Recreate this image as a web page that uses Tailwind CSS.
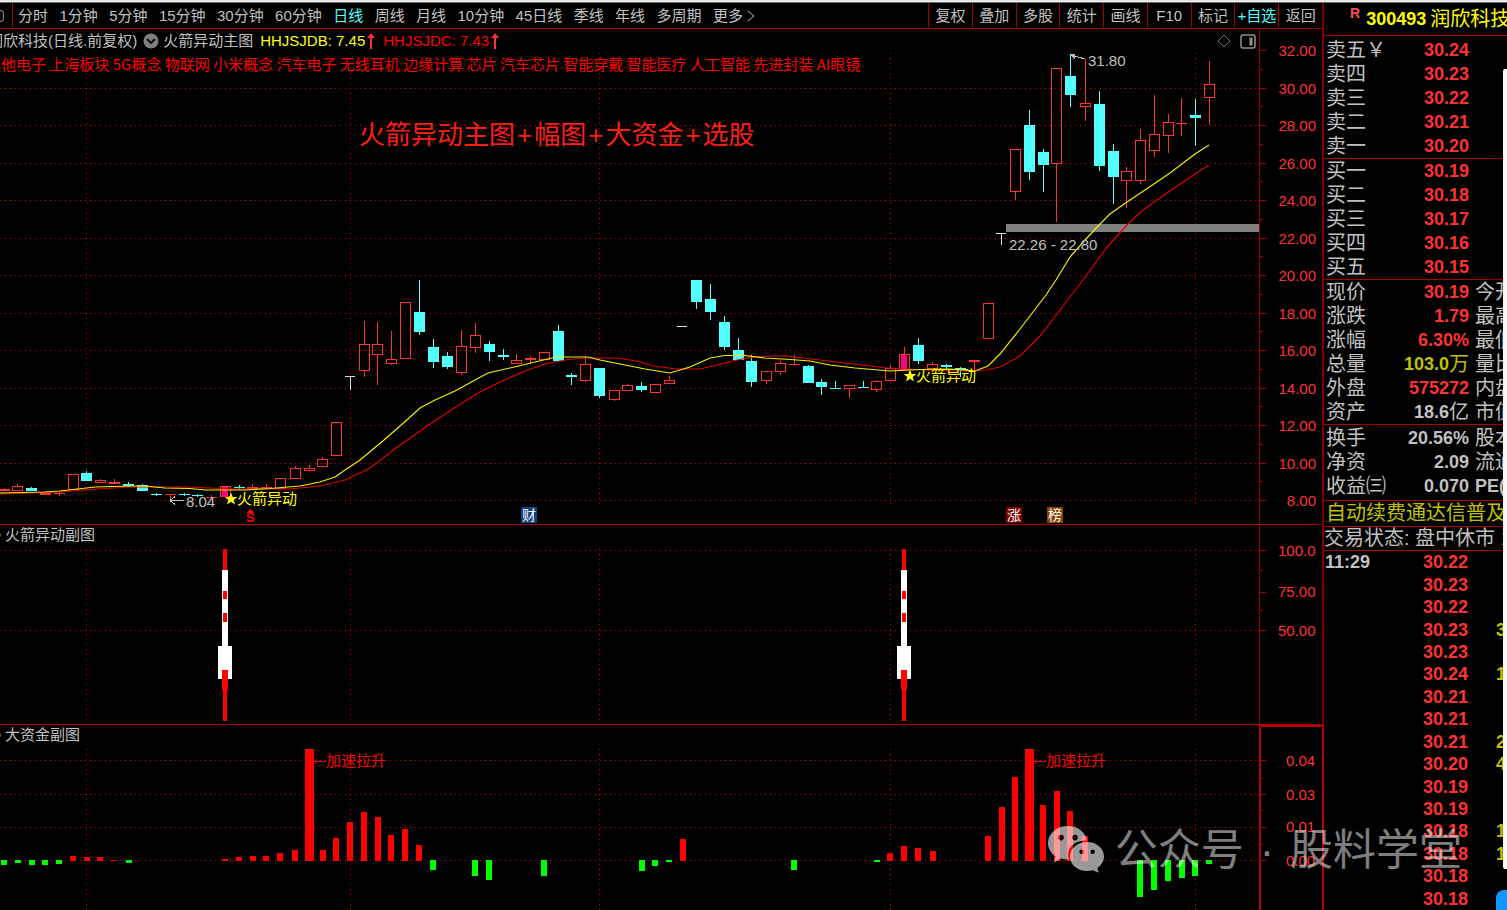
<!DOCTYPE html>
<html lang="zh-CN">
<head>
  <meta charset="UTF-8">
  <meta name="viewport" content="width=device-width, initial-scale=1.0" />
  <title>润欣科技 300493</title>
  <script src="https://cdn.jsdelivr.net/npm/@tailwindcss/browser@4"></script>
</head>
<body class="relative flex h-screen flex-col overflow-hidden bg-black font-['Liberation_Sans','Noto_Sans_CJK_SC',sans-serif] text-[15px] text-[#c0c0c0]">

  <div class="h-[3px] shrink-0 border-b border-[#707070] bg-[#e8e8e8]"></div>

  <div class="flex min-h-0 flex-1">

    <main class="min-w-0 flex-1 overflow-hidden">

      <!-- Toolbar -->
      <div class="flex h-[26px] items-stretch justify-between overflow-hidden border-b border-[#a00000] leading-6 whitespace-nowrap">
        <div class="flex">
          <div class="flex w-[13px] items-center border-r border-[#a00000]">
            <span class="h-3 w-1 rounded-r-sm border border-l-0 border-[#909090]"></span>
          </div>
          <nav class="ml-[5px] flex w-[737px] justify-between">
            <button>分时</button>
            <button>1分钟</button>
            <button>5分钟</button>
            <button>15分钟</button>
            <button>30分钟</button>
            <button>60分钟</button>
            <button class="text-[#54ffff]">日线</button>
            <button>周线</button>
            <button>月线</button>
            <button>10分钟</button>
            <button>45日线</button>
            <button>季线</button>
            <button>年线</button>
            <button>多周期</button>
            <button class="flex items-center gap-1">更多
              <svg class="h-3 w-2" viewBox="0 0 8 12" fill="none" stroke="currentColor"><path d="M1 1l6 5-6 5" /></svg>
            </button>
          </nav>
        </div>
        <div class="flex w-[396px] border-r-2 border-[#800000]">
          <button class="flex-1 border-l border-[#a00000]">复权</button>
          <button class="flex-1 border-l border-[#a00000]">叠加</button>
          <button class="flex-1 border-l border-[#a00000]">多股</button>
          <button class="flex-1 border-l border-[#a00000]">统计</button>
          <button class="flex-1 border-l border-[#a00000]">画线</button>
          <button class="flex-1 border-l border-[#a00000]">F10</button>
          <button class="flex-1 border-l border-[#a00000]">标记</button>
          <button class="flex-1 border-l border-[#a00000] text-[#54ffff]">+自选</button>
          <button class="flex-1 border-l border-[#a00000]">返回</button>
        </div>
      </div>

      <!-- K线主图 -->
      <section class="relative">
        <svg id="main" class="block h-auto w-full" viewBox="0 29 1324 496"></svg>
        <div class="absolute inset-x-0 top-0 flex justify-between pr-[68px] leading-6 whitespace-nowrap">
          <div class="-ml-3 flex items-center">
            <span>润欣科技(日线.前复权)</span>
            <button aria-label="指标" class="mx-1 pl-0.5">
              <svg class="size-4" viewBox="0 0 16 16"><circle cx="8" cy="8" r="7.5" fill="#808080" /><path d="M4 6l4 4 4-4" fill="none" stroke="#101010" stroke-width="2" /></svg>
            </button>
            <span>火箭异动主图</span>
            <span class="ml-[7px] text-[#ffff00]">HHJSJDB: 7.45</span>
            <svg class="ml-0.5 h-4 w-2" viewBox="0 0 8 16"><path d="M4 0l4 5H0z M3 4h2v12H3z" fill="#ff3232" /></svg>
            <span class="ml-2 text-[#ff0000]">HHJSJDC: 7.43</span>
            <svg class="ml-0.5 h-4 w-2" viewBox="0 0 8 16"><path d="M4 0l4 5H0z M3 4h2v12H3z" fill="#ff3232" /></svg>
          </div>
          <div class="flex items-center gap-2">
            <button aria-label="标记点"><svg class="size-4" viewBox="0 0 16 16" fill="none" stroke="#707070"><path d="M8 2l6 6-6 6-6-6z" /></svg></button>
            <button aria-label="侧栏"><svg class="size-4" viewBox="0 0 16 16" fill="none" stroke="#909090" stroke-width="1.5"><rect x="1" y="2" width="14" height="13" rx="2" /><rect x="9.5" y="4.5" width="3" height="8" fill="#909090" stroke="none" /></svg></button>
          </div>
        </div>
        <div class="absolute top-[23px] -left-[14px] font-['Noto_Sans_CJK_SC',sans-serif] leading-6 whitespace-nowrap text-[#ff0000]">其他电子 上海板块 5G概念 物联网 小米概念 汽车电子 无线耳机 边缘计算 芯片 汽车芯片 智能穿戴 智能医疗 人工智能 先进封装 AI眼镜</div>
      </section>

      <!-- 火箭异动副图 -->
      <section class="relative">
        <svg id="rocket" class="block h-auto w-full" viewBox="0 525 1324 200"></svg>
        <h2 class="absolute top-0 left-[5px] leading-5">火箭异动副图</h2>
      </section>

      <!-- 大资金副图 -->
      <section class="relative">
        <svg id="money" class="block h-auto w-full" viewBox="0 725 1324 185"></svg>
        <h2 class="absolute top-0 left-[5px] leading-5">大资金副图</h2>
      </section>
    </main>

    <!-- 行情栏 -->
    <aside class="flex w-[183px] shrink-0 flex-col overflow-hidden text-xl leading-6 whitespace-nowrap">
      <header class="flex h-[33px] shrink-0 items-center border-b border-[#a00000] pl-[26px] text-[#ffff00]">
        <span class="mr-1.5 self-start text-sm font-bold text-[#ff5050]">R</span>
        <span class="text-lg font-bold">300493</span>
        <h1 class="ml-1">润欣科技</h1>
      </header>
      <div class="shrink-0 border-b border-[#a00000] pt-0.5"><table class="w-[200px] table-fixed"><tbody id="asks"></tbody></table></div>
      <div class="shrink-0 border-b border-[#a00000]"><table class="w-[200px] table-fixed"><tbody id="bids"></tbody></table></div>
      <div class="shrink-0 border-b border-[#a00000]"><table class="w-[200px] table-fixed"><tbody id="quote"></tbody></table></div>
      <div class="shrink-0 border-b border-[#a00000] pt-px pb-0.5"><table class="w-[200px] table-fixed"><tbody id="finance"></tbody></table></div>
      <p class="h-[26px] shrink-0 border-b border-[#a00000] pl-0.5 text-[#c0c000]">自动续费通达信普及</p>
      <p class="h-6 shrink-0 border-b border-[#a00000] leading-[22px]">交易状态: 盘中休市 10:</p>
      <div class="min-h-0 flex-1">
        <table class="h-full w-[200px] table-fixed text-lg font-bold leading-5"><tbody id="ticks"></tbody></table>
      </div>
    </aside>
  </div>

  <!-- 水印 -->
  <div class="pointer-events-none absolute right-[45px] bottom-[34px] flex items-center gap-2.5 text-[43px] leading-[52px] whitespace-nowrap text-white/50">
    <svg class="h-[48px] w-[58px]" viewBox="0 0 58 48">
      <g fill="#fff" fill-opacity=".6" fill-rule="evenodd">
        <path d="M21 0C9.800 0 1 7.500 1 17c0 5.400 2.900 10.200 7.400 13.300L7 36.500l7-4c2.600.8 5 1.100 8 1C18.500 23 27 14 40 14.500 38.500 6 30.500 0 21 0zM14 8.800a2.800 2.800 0 110 5.600 2.800 2.800 0 010-5.600zM28 8.800a2.800 2.800 0 110 5.600 2.800 2.800 0 010-5.600z" />
        <path d="M40 16c-9.500 0-17 6.400-17 14.400S30.500 45 40 45c2 0 4-.3 5.800-.8l6 2.500-1.600-4.700c4.200-2.600 6.800-6.900 6.800-11.600C57 22.400 49.500 16 40 16zM34.500 23.500a2.200 2.200 0 110 4.400 2.200 2.200 0 010-4.400zM45.700 23.500a2.200 2.200 0 110 4.400 2.200 2.200 0 010-4.400z" />
      </g>
    </svg>
    <span>公众号<span class="px-4">·</span>股料学堂</span>
  </div>

  <!-- 右侧浮层边缘 -->
  <div class="absolute top-[69px] right-0 h-[800px] w-1 rounded-l-xs bg-[#f8f8f8]"></div>
  <div class="absolute right-0 bottom-0 h-5 w-[11px] rounded-tl-lg bg-[#1296ff]"></div>

  <script>
    const RED = '#ff3232', CYAN = '#54ffff', GRID = '#d80000', LINE = '#a00000';

    const rect = (x, y, w, h, c) => `<rect x="${x}" y="${y}" width="${w}" height="${h}" fill="${c}"/>`;
    const text = (x, y, s, c, size = 15) => `<text x="${x}" y="${y}" fill="${c}" font-size="${size}">${s}</text>`;
    const dash = (d) => `<path d="${d}" stroke="${GRID}" stroke-dasharray="1 4" fill="none"/>`;

    // 网格 + 坐标轴
    function grid(ys, top, bottom) {
      let s = ys.map(y => dash(`M0 ${y}H1259`)).join('');
      s += [86.5, 350.5, 599.5, 890.5, 1195.5].map(x => dash(`M${x} ${top}V${bottom}`)).join('');
      return s;
    }
    const ticksAt = (ys, w) => ys.map(y => rect(1260, y, w, 1, LINE)).join('');

    // [x, 颜色, 最高, 实体上, 实体下, 最低]
    const candles = [
      [4,'r',488,489,491,491],[17,'r',484,486,491,491],[31,'c',487,488,491,491],[45,'r',493,493,495,495],[59,'r',492,493,494,496],
      [73,'r',474,474,490,490],[86,'c',471,473,481,481],[100,'r',479,480,483,483],[114,'r',479,482,484,484],[128,'c',482,484,486,487],
      [142,'c',484,485,491,491],[156,'c',493,494,495,496],[170,'r',494,494,495,499],[184,'c',493,494,495,496],[197,'c',494,495,496,497],
      [211,'r',495,497,498,498],[225,'m',486,486,497,497],[239,'c',485,487,488,489],[252,'r',484,487,489,489],[266,'r',484,487,488,489],
      [280,'r',478,478,489,489],[295,'r',466,468,479,479],[309,'r',465,468,471,471],[322,'r',457,459,467,467],[336,'r',422,422,456,456],
      [350,'w',376,376,377,390],[364,'r',321,344,371,377],[377,'r',322,344,355,385],[391,'r',331,359,364,365],[405,'r',302,302,359,359],
      [419,'c',280,312,332,335],[433,'c',339,347,362,368],[447,'c',352,356,367,369],[461,'r',330,346,373,375],[475,'r',323,335,348,353],
      [489,'c',341,344,352,361],[503,'c',349,355,357,360],[516,'r',354,360,364,364],[530,'r',356,358,360,364],[544,'r',352,352,360,360],
      [558,'c',325,331,361,362],[571,'c',373,375,377,385],[585,'r',356,364,381,382],[599,'c',368,368,396,398],[614,'r',390,390,400,401],
      [627,'r',384,385,391,391],[641,'c',382,386,390,392],[655,'r',384,384,393,393],[669,'r',376,380,384,384],[682,'w',326,326,327,327],
      [696,'c',280,280,302,309],[710,'c',284,299,312,320],[724,'c',316,322,347,350],[738,'c',338,350,360,360],[751,'c',355,361,382,387],
      [766,'r',371,371,381,384],[780,'r',361,363,372,375],[794,'r',355,364,365,366],[808,'c',365,366,383,383],[821,'c',379,382,387,395],
      [835,'c',381,388,389,389],[849,'r',385,385,389,398],[863,'c',381,387,388,388],[876,'r',380,381,390,392],[890,'r',365,368,381,381],
      [904,'m',347,354,370,370],[918,'c',338,345,361,364],[932,'r',362,364,369,369],[946,'c',364,365,367,371],[960,'c',367,368,370,377],
      [974,'r',360,360,362,371],[988,'r',303,303,339,339],[1001,'w',233,233,234,245],[1015,'r',149,149,192,200],[1029,'c',110,125,172,180],
      [1043,'c',149,152,165,192],[1056,'r',68,68,164,222],[1070,'c',54,76,95,107],[1085,'r',59,103,107,121],[1099,'c',91,104,166,171],
      [1113,'c',144,151,177,204],[1126,'r',167,171,181,208],[1140,'r',129,140,181,184],[1154,'r',95,134,151,157],[1168,'r',114,122,136,153],
      [1181,'r',98,123,124,136],[1195,'c',99,115,118,146],[1209,'r',61,84,98,125]
    ];

    function candle([x, t, hi, top, bot, lo]) {
      const c = { r: RED, c: CYAN, m: '#ff3232', w: '#e0e0e0' }[t];
      let s = '';
      if (t === 'c' || t === 'w' || bot - top < 3) {
        s += rect(x, hi, 1, Math.max(lo - hi, 1), c);
        s += t === 'w' ? rect(x - 5, top, 10, 1, c) : rect(x - 5, top, 11, bot - top, c);
        return s;
      }
      s += rect(x, hi, 1, top - hi, c) + rect(x, bot, 1, lo - bot, c);
      s += `<rect x="${x - 4.5}" y="${top + .5}" width="10" height="${bot - top - 1}" fill="none" stroke="${c}"/>`;
      if (t === 'm') s += rect(x - 3, top + 1, 6, bot - top - 1, '#ff0080');
      return s;
    }

    const yellowLine = '0,493 45,492 60,491 82,488.500 95,487 130,486 145,486 165,488 190,488.500 205,490 245,490 270,488.500 300,486 320,482 335,477 345,470 360,460 384,440 408,419 420,408 435,400 455,391 475,380 488,373 510,368 535,362 556,357 588,357 600,360 620,364 645,369 670,373 690,367 710,358 725,355.500 745,355.500 765,358 790,359.500 810,361 830,365 855,368 890,371 920,369.500 950,369 975,371 988,366 1000,354 1020,329 1046,295 1056,280 1070,257 1085,240 1100,224 1110,214 1127,202 1145,190 1170,173 1195,154 1209,145';
    const redLine = '0,494 60,492 90,489.500 130,487 190,487 230,489 290,489 320,486 345,480 370,468 400,445 436,420 476,394 500,382 525,371 545,364 565,360 583,358 616,358 637,361 653,366 677,369 700,369 717,365 733,361 747,358 767,356 787,356 820,360 853,364 887,368 925,370 960,371 985,370 1000,367 1020,356 1040,336 1060,310 1083,280 1107,247 1127,225 1143,210 1167,193 1195,174 1209,165';

    const star = (x, y) => `<path transform="translate(${x} ${y})" d="M0-6.500L1.700-2H6.300L2.700.9 4 5.500 0 2.800-4 5.500-2.700.9-6.300-2H-1.700z" fill="#ffff00" shape-rendering="auto"/>`;
    const tag = (x, s, c) => rect(x, 507, 16, 16, c) + text(x + 1, 520, s, '#fff', 14);

    function drawMain() {
      const ys = [];
      for (let i = 0; i < 12; i++) ys.push(Math.floor(88 + i * 37.5) + .5);
      let s = grid(ys, 53, 505);
      s += ticksAt([50, ...ys.map(y => y - .5)], 6);
      for (let i = 0; i < 12; i++) s += rect(1260, Math.floor(69 + i * 37.5), 3, 1, LINE);
      for (let i = 0; i < 13; i++) {
        const label = (32 - i * 2).toFixed(2);
        s += `<text x="1316" y="${Math.floor(50.5 + i * 37.5) + 6}" text-anchor="end" fill="${RED}" font-size="15">${label}</text>`;
      }
      s += rect(1006, 224, 253, 8, '#808080');
      s += candles.map(candle).join('');
      s += `<polyline points="${redLine}" fill="none" stroke="#e00000" stroke-width="1.2" shape-rendering="auto"/>`;
      s += `<polyline points="${yellowLine}" fill="none" stroke="#f0f000" stroke-width="1.2" shape-rendering="auto"/>`;
      s += text(1009, 250, '22.26 - 22.80', '#c0c0c0') + text(1088, 66, '31.80', '#c0c0c0');
      s += `<path d="M1085 59l-14-4m0-1h4m-3 1l3 4M170 500.500h14m-14 0l5-4m-5 4l5 4" fill="none" stroke="#c0c0c0"/>`;
      s += text(186, 507, '8.04', '#c0c0c0');
      s += star(231, 499) + text(237, 504, '火箭异动', '#ffff00');
      s += star(910, 376) + text(916, 381, '火箭异动', '#ffff00');
      s += `<path d="M250.500 509l4 4h-8z" fill="#f00"/><text x="246" y="522" fill="#f00" font-size="13" font-weight="700">S</text>`;
      s += tag(521, '财', '#104080') + tag(1006, '涨', '#800000') + tag(1047, '榜', '#8a4400');
      s += `<text x="359" y="144" fill="#ff1e14" font-size="26">火箭异动主图<tspan dx="2">+</tspan><tspan dx="2">幅图</tspan><tspan dx="2">+</tspan><tspan dx="2">大资金</tspan><tspan dx="2">+</tspan><tspan dx="2">选股</tspan></text>`;
      s += rect(1259, 29, 1, 496, LINE) + rect(0, 524, 1322, 1, LINE) + rect(1322, 29, 2, 496, '#800000');
      document.getElementById('main').innerHTML = `<g shape-rendering="crispEdges">${s}</g>`;
    }

    function rocket(x) {
      return rect(x - 2, 549, 4, 21, '#f00') + rect(x - 3, 570, 6, 76, '#fff') + rect(x - 2, 591, 4, 8, '#f00') +
        rect(x - 2, 613, 4, 9, '#f00') + rect(x - 7, 646, 14, 33, '#fff') + rect(x - 3, 670, 6, 20, '#f00') + rect(x - 2, 690, 4, 31, '#f00');
    }

    function drawRocket() {
      let s = grid([550.5, 630.5], 549, 720);
      s += ticksAt([550, 592, 630], 6) + ticksAt([570, 610], 3);
      s += text(1278, 556, '100.0', RED) + text(1278, 597, '75.00', RED) + text(1278, 636, '50.00', RED);
      s += rocket(225) + rocket(904);
      s += `<path d="M-1 531q2.500 4 0 8" fill="none" stroke="#909090" shape-rendering="auto"/>`;
      s += rect(1259, 525, 1, 200, LINE) + rect(0, 724, 1322, 1, LINE) + rect(1322, 525, 2, 200, '#800000');
      document.getElementById('rocket').innerHTML = `<g shape-rendering="crispEdges">${s}</g>`;
    }

    // [x, y] 高于零轴为红, 低于零轴为绿
    const bars = [
      [4,865],[18,863],[32,865],[45,865],[59,864],[73,856],[87,857],[100,857],[114,860],[129,863],[225,859],[239,857],[253,856],[266,856],
      [280,853],[295,850],[309,749],[323,850],[336,838],[350,822],[364,812],[378,817],[391,835],[405,829],[419,845],[433,870],[475,876],
      [489,880],[544,876],[642,871],[655,866],[669,862],[683,839],[794,870],[877,862],[890,853],[904,846],[918,848],[933,851],[988,836],
      [1002,807],[1015,777],[1029,749],[1043,805],[1057,791],[1070,811],[1085,836],[1140,897],[1154,890],[1168,881],[1182,878],[1195,876],[1209,864]
    ];

    function drawMoney() {
      let s = grid([760.5, 794.5, 827.5, 860.5], 749, 910);
      s += ticksAt([760, 794, 827, 860], 6) + ticksAt([778, 810, 844], 3);
      s += [['0.04', 766], ['0.03', 800], ['0.01', 832], ['0.00', 866]].map(([v, y]) => text(1286, y, v, RED)).join('');
      bars.forEach(([x, y]) => {
        const w = y === 749 ? 9 : 6;
        s += y <= 860 ? rect(x - w / 2, y, w, 861 - y, '#f00') : rect(x - w / 2, 860, w, y - 860, '#0f0');
      });
      [314, 1034].forEach(x => {
        s += `<path d="M${x} 761.500h12m-12 0l3-2m-3 2l3 2" fill="none" stroke="#f00"/>` + text(x + 12, 766, '加速拉升', '#ff0000');
      });
      s += `<path d="M-1 731q2.500 4 0 8" fill="none" stroke="#909090" shape-rendering="auto"/>`;
      s += `<path d="M1260 910V726h62.500V910" fill="none" stroke="#b80000" stroke-width="2"/>`;
      document.getElementById('money').innerHTML = `<g shape-rendering="crispEdges">${s}</g>`;
    }

    // 行情行: [名称, 数值, 颜色类, 单位, 右侧名称]
    const row = ([name, value, color = 'text-[#ff3232]', unit = '', next = '']) => `
      <tr class="h-6">
        <th scope="row" class="w-[62px] p-0 pl-0.5 text-left align-middle font-normal"><span class="flex h-6 items-center">${name}</span></th>
        <td class="w-[83px] p-0 text-right align-middle text-lg leading-6"><span class="flex items-center justify-end ${color}"><b>${value}</b><span class="text-xl leading-6">${unit}</span></span></td>
        <td class="p-0 pl-1.5 align-middle">${next}</td>
      </tr>`;
    const fill = (id, rows) => document.getElementById(id).innerHTML = rows.map(row).join('');

    fill('asks', [['卖五￥', '30.24'], ['卖四', '30.23'], ['卖三', '30.22'], ['卖二', '30.21'], ['卖一', '30.20']]);
    fill('bids', [['买一', '30.19'], ['买二', '30.18'], ['买三', '30.17'], ['买四', '30.16'], ['买五', '30.15']]);
    fill('quote', [
      ['现价', '30.19', undefined, '', '今开'],
      ['涨跌', '1.79', undefined, '', '最高'],
      ['涨幅', '6.30%', undefined, '', '最低'],
      ['总量', '103.0', 'text-[#c0c000]', '万', '量比'],
      ['外盘', '575272', undefined, '', '内盘'],
      ['资产', '18.6', 'text-[#c0c0c0]', '亿', '市值']
    ]);
    fill('finance', [
      ['换手', '20.56%', 'text-[#c0c0c0]', '', '股本'],
      ['净资', '2.09', 'text-[#c0c0c0]', '', '流通'],
      ['收益㈢', '0.070', 'text-[#c0c0c0]', '', '<b class="block h-6 text-lg leading-6">PE(</b>']
    ]);

    const ticks = [
      ['30.22', ''], ['30.23', ''], ['30.22', ''], ['30.23', '3'], ['30.23', ''], ['30.24', '1'], ['30.21', ''], ['30.21', ''],
      ['30.21', '2'], ['30.20', '4'], ['30.19', ''], ['30.19', ''], ['30.18', '1'], ['30.18', '1'], ['30.18', ''], ['30.18', '']
    ];
    document.getElementById('ticks').innerHTML = ticks.map(([p, v], i) => `
      <tr>
        <td class="w-[62px] p-0 pl-px align-middle">${i ? '' : '11:29'}</td>
        <td class="w-[82px] p-0 text-right align-middle text-[#ff3232]">${p}</td>
        <td class="p-0 pl-7 align-middle text-[#c0c000]">${v}</td>
      </tr>`).join('');

    drawMain();
    drawRocket();
    drawMoney();
  </script>
</body>
</html>
